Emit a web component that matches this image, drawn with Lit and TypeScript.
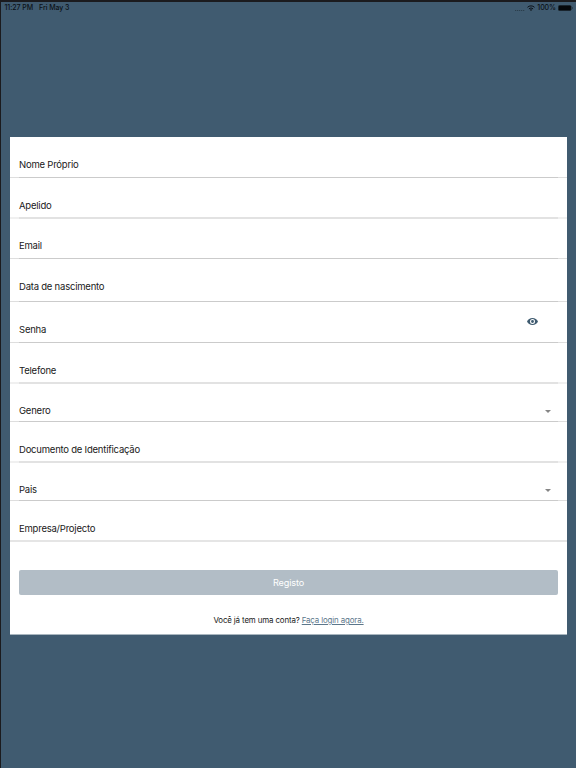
import { LitElement, html, css, svg } from "lit";
import { customElement } from "lit/decorators.js";
import { classMap } from "lit/directives/class-map.js";
import { styleMap } from "lit/directives/style-map.js";

interface Field {
  label: string;
  height: number;
  soft?: boolean;
  full?: boolean;
  icon?: "eye" | "caret";
}

const FIELDS: Field[] = [
  { label: "Nome Próprio", height: 41 },
  { label: "Apelido", height: 40, soft: true },
  { label: "Email", height: 41 },
  { label: "Data de nascimento", height: 43 },
  { label: "Senha", height: 41, icon: "eye" },
  { label: "Telefone", height: 40, soft: true },
  { label: "Genero", height: 39, icon: "caret" },
  { label: "Documento de Identificação", height: 40, soft: true },
  { label: "Pais", height: 39, icon: "caret" },
  { label: "Empresa/Projecto", height: 40, soft: true, full: true },
];

const eye = svg`<svg class="eye" viewBox="0 0 22 14"><path fill-rule="evenodd" fill="#3f5b70" d="M11 0C6 0 2 3 0 7c2 4 6 7 11 7s9-3 11-7c-2-4-6-7-11-7zm0 12a5 5 0 1 1 0-10 5 5 0 0 1 0 10zm0-2.1a2.9 2.9 0 1 0 0-5.8 2.9 2.9 0 0 0 0 5.8z"/></svg>`;
const caret = svg`<svg class="caret" viewBox="0 0 6 3"><path fill="#858585" d="M0 0h6L3 3z"/></svg>`;

@customElement("status-bar")
class StatusBar extends LitElement {
  static styles = css`
    :host { display: flex; justify-content: space-between; height: 12px; padding: 0 3px 0 3.5px;
      font: 500 7px/12px Inter, "Liberation Sans", sans-serif; letter-spacing: -0.05px; color: #0b1117; }
    .group { display: flex; align-items: center; }
    .time { width: 34.5px; white-space: nowrap; }
    .dots { width: 10px; height: 1px; margin: 4px 2px 0 0;
      background: repeating-linear-gradient(90deg, #2b3e4d 0 1px, #3a5365 1px 2px); }
    .wifi { width: 8px; height: 6px; margin-right: 2px; }
    .battery { width: 15px; height: 6px; margin-left: 2px; }
  `;
  render() {
    return html`
      <div class="group"><span class="time">11:27 PM</span><span>Fri May 3</span></div>
      <div class="group">
        <span class="dots"></span>
        <svg class="wifi" viewBox="0 0 16 12"><g fill="none" stroke="#0b1117" stroke-width="2"><path d="M1 4.6a10 10 0 0 1 14 0M3.8 7.8a6 6 0 0 1 8.4 0"/></g><path fill="#0b1117" d="M8 12 5.6 9.700a3.4 3.4 0 0 1 4.8 0z"/></svg>
        <span>100%</span>
        <svg class="battery" viewBox="0 0 30 12"><rect x=".5" y=".5" width="26" height="11" rx="3" fill="#05080b" stroke="#26343f"/><path d="M28 4v4c2-.8 2-3.200 0-4z" fill="#182630"/></svg>
      </div>`;
  }
}

@customElement("app-root")
class AppRoot extends LitElement {
  static styles = css`
    :host { display: block; box-sizing: border-box; height: 768px; overflow: hidden;
      border-top: 2px solid #1b1b1e; border-left: 1px solid #1b1b1e; background: #405b70;
      font-family: Inter, "Liberation Sans", sans-serif; color: #202020; }
    .card { box-sizing: border-box; width: 557px; height: 498px; margin: 123px 0 0 9px;
      background: #fff; border-bottom: 1px solid #a9b6bf; }
    .field { position: relative; box-sizing: border-box; display: flex; flex-direction: column;
      justify-content: space-between; }
    .label { padding: 21px 0 0 9px; font-size: 9.5px; line-height: 14px; letter-spacing: -0.22px; }
    .line { height: 1px; background: linear-gradient(90deg, #dedede 9px, #cbcbcb 9px 548px, #dedede 548px); }
    .soft .line { height: 2px; margin-bottom: -1px;
      background: linear-gradient(90deg, #f0f0f0 9px, #e2e2e2 9px 548px, #f0f0f0 548px); }
    .full .line { background: #e5e5e5; }
    .eye { position: absolute; right: 29px; top: 16px; width: 11px; height: 7px; }
    .caret { position: absolute; right: 16.5px; top: 27px; width: 6px; height: 3px; }
    .button { display: block; box-sizing: border-box; width: 539px; height: 25px; margin: 29px 0 0 9px;
      padding: 0; border: 0; border-radius: 2px; background: #b2bdc6; color: #fff;
      font: 9.1px/25px Inter, "Liberation Sans", sans-serif; letter-spacing: -0.14px; text-align: center; }
    .login { margin-top: 19px; font-size: 7.9px; line-height: 13px; letter-spacing: -0.13px; text-align: center; }
    .link { color: #5c778b; text-decoration: underline; text-underline-offset: 1px; }
  `;
  render() {
    return html`
      <status-bar></status-bar>
      <main class="card">
        ${FIELDS.map((f) => html`
          <div class=${classMap({ field: true, soft: !!f.soft, full: !!f.full })}
            style=${styleMap({ height: `${f.height}px` })}>
            <div class="label">${f.label}</div>
            ${f.icon === "eye" ? eye : f.icon === "caret" ? caret : ""}
            <div class="line"></div>
          </div>`)}
        <button class="button">Registo</button>
        <div class="login">Você já tem uma conta? <a class="link">Faça login agora.</a></div>
      </main>`;
  }
}
